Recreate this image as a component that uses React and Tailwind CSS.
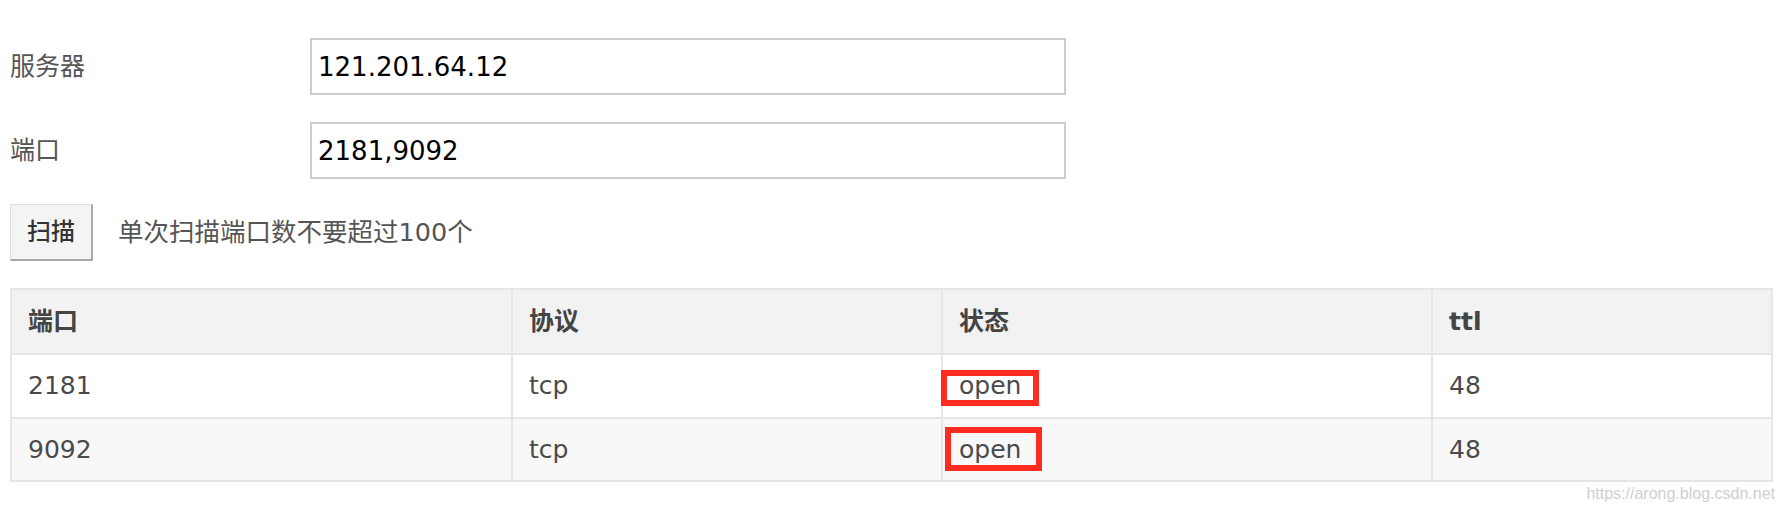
import React from "react";

const font = { fontFamily: '"DejaVu Sans", "Noto Sans CJK SC", sans-serif' };

const rows = [
  { port: "2181", proto: "tcp", state: "open", ttl: "48", bg: "bg-white", h: "h-[64px]", box: "left-[-2px] top-[15px] w-[98px] h-[36px]" },
  { port: "9092", proto: "tcp", state: "open", ttl: "48", bg: "bg-[#f8f8f8]", h: "h-[63px]", box: "left-[2px] top-[8px] w-[97px] h-[44px]" },
];

const cols = ["w-[501px]", "w-[430px]", "w-[490px]", "w-[340px]"];

function Cell({ w, className = "", children }) {
  return (
    <div className={`${w} shrink-0 flex items-center pl-[16px] border-r-2 border-b-2 border-[#e6e6e6] relative ${className}`}>
      {children}
    </div>
  );
}

export default function App() {
  return (
    <div className="bg-white w-[1786px] h-[512px] pl-[10px] pt-[38px] text-[25px] text-[#4a4a4a]" style={font}>
      <div className="flex items-center h-[57px]">
        <div className="w-[300px] text-[#555]">服务器</div>
        <input
          readOnly
          value="121.201.64.12"
          className="w-[756px] h-[57px] border-2 border-[#cccccc] px-[6px] text-[26px] text-black outline-none"
          style={font}
        />
      </div>
      <div className="flex items-center h-[57px] mt-[27px]">
        <div className="w-[300px] text-[#555]">端口</div>
        <input
          readOnly
          value="2181,9092"
          className="w-[756px] h-[57px] border-2 border-[#cccccc] px-[6px] text-[26px] text-black outline-none"
          style={font}
        />
      </div>
      <div className="flex items-center h-[57px] mt-[25px]">
        <button
          className="w-[83px] h-[57px] bg-[#f4f4f4] border-t border-l border-[#dddddd] border-r-2 border-b-2 border-r-[#a8a8a8] border-b-[#a8a8a8] text-[#333] text-[24px] font-medium flex items-center justify-center"
          style={font}
        >
          扫描
        </button>
        <div className="ml-[25px] text-[25.5px] text-[#555]">单次扫描端口数不要超过100个</div>
      </div>

      <div className="mt-[27px] w-[1763px] border-t-2 border-l-2 border-[#e6e6e6]">
        <div className="flex h-[65px] bg-[#f2f2f2] font-bold text-[#444]">
          <Cell w={cols[0]}>端口</Cell>
          <Cell w={cols[1]}>协议</Cell>
          <Cell w={cols[2]}>状态</Cell>
          <Cell w={cols[3]}>ttl</Cell>
        </div>
        {rows.map((r) => (
          <div key={r.port} className={`flex ${r.h} ${r.bg}`}>
            <Cell w={cols[0]}>{r.port}</Cell>
            <Cell w={cols[1]}>{r.proto}</Cell>
            <Cell w={cols[2]}>
              {r.state}
              <span className={`absolute ${r.box} border-[6px] border-[#fe2b21] pointer-events-none`} />
            </Cell>
            <Cell w={cols[3]}>{r.ttl}</Cell>
          </div>
        ))}
      </div>
      <div className="w-[1765px] flex justify-end mt-[4px]">
        <span className="text-[16px] leading-none text-[#cfcfcf]" style={{ fontFamily: '"Liberation Sans", Arial, sans-serif' }}>
          https://arong.blog.csdn.net
        </span>
      </div>
    </div>
  );
}
